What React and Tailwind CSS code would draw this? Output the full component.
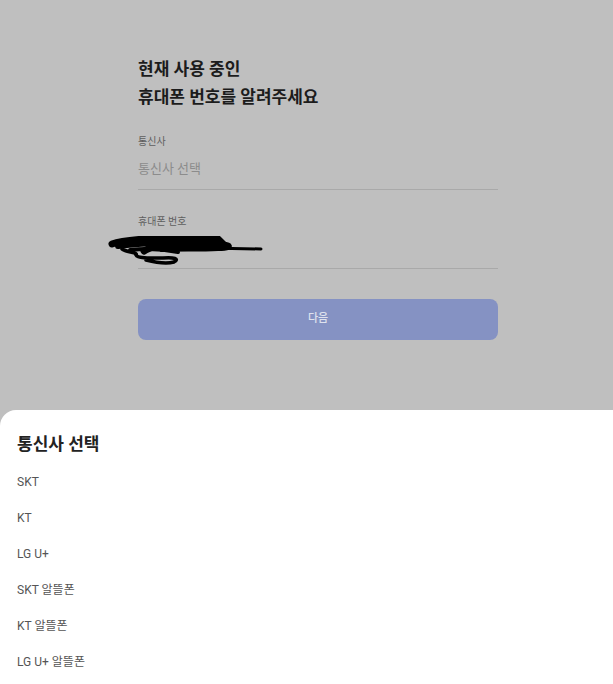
export default function App(){

 const carriers=["SKT","KT","LG U+","SKT 알뜰폰","KT 알뜰폰","LG U+ 알뜰폰"];

 return(
  <div className="w-[613px] h-[684px] bg-[#bfbfbf] flex flex-col overflow-hidden" style={{fontFamily:'Roboto,"Noto Sans CJK KR",sans-serif'}}>

    <div className="ml-[138px] w-[360px] pt-[55px] flex-1">
      <h1 className="text-[17px] leading-[28px] font-bold text-[#1c1c1c]">
        현재 사용 중인<br/>휴대폰 번호를 알려주세요
      </h1>

      <p className="mt-[24px] text-[10px] leading-[14px] text-[#5e5e5e]">통신사</p>
      <div className="mt-[10px] pb-[10px] border-b border-[#a9a9a9] text-[13px] leading-[20px] text-[#8c8c8c]">
        통신사 선택
      </div>

      <p className="mt-[25px] text-[10px] leading-[14px] text-[#5e5e5e]">휴대폰 번호</p>
      <div className="mt-[10px] h-[30px] border-b border-[#a9a9a9] relative">
        <svg className="absolute left-[-30px] top-[-3px]" width="160" height="30" viewBox="0 0 160 30">
          <path d="M4 8 C20 2 70 1 110 3 L112 5 C100 7 80 6 60 8 C45 9 40 13 36 15" stroke="#000" strokeWidth="7" fill="none" strokeLinecap="round"/>
          <path d="M10 10 C40 6 80 6 106 8 L118 9 C124 10 120 12 110 12 C90 13 70 12 54 13" stroke="#000" strokeWidth="6" fill="none" strokeLinecap="round"/>
          <path d="M22 14 C40 12 60 14 70 16" stroke="#000" strokeWidth="4" fill="none" strokeLinecap="round"/>
          <path d="M14 13 C20 17 30 16 28 19 C30 23 45 22 55 22 C66 21 72 23 66 26 C58 28 46 26 38 24" stroke="#000" strokeWidth="3.5" fill="none" strokeLinecap="round"/>
          <path d="M100 12 L153 13" stroke="#000" strokeWidth="3" strokeLinecap="round"/>
        </svg>
      </div>

      <button className="mt-[30px] w-full h-[41px] rounded-[8px] bg-[#8592c3] text-[#dfe2ee] text-[11px] font-medium">
        다음
      </button>
    </div>

    <div className="bg-white rounded-tl-[16px] pt-[22px] pl-[17px] h-[274px]">
      <h2 className="text-[17px] leading-[24px] font-bold text-[#222]">통신사 선택</h2>
      <ul className="mt-[8px]">
        {carriers.map(c=>(
          <li key={c} className="text-[12px] leading-[36px] text-[#555]">{c}</li>
        ))}
      </ul>
    </div>

  </div>
 );
}
